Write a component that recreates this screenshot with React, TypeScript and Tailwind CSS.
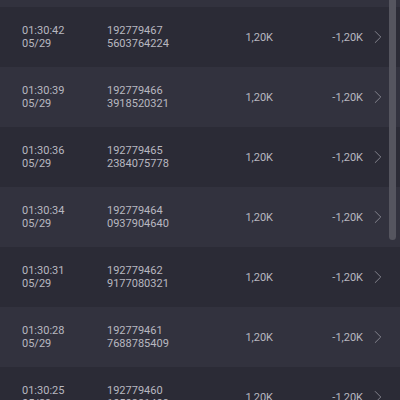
import { ChevronRight } from "lucide-react";

interface Trade {
  time: string;
  date: string;
  id: string;
  ref: string;
  amount: string;
  pnl: string;
}

const trades: Trade[] = [
  { time: "01:30:42", date: "05/29", id: "192779467", ref: "5603764224", amount: "1,20K", pnl: "-1,20K" },
  { time: "01:30:39", date: "05/29", id: "192779466", ref: "3918520321", amount: "1,20K", pnl: "-1,20K" },
  { time: "01:30:36", date: "05/29", id: "192779465", ref: "2384075778", amount: "1,20K", pnl: "-1,20K" },
  { time: "01:30:34", date: "05/29", id: "192779464", ref: "0937904640", amount: "1,20K", pnl: "-1,20K" },
  { time: "01:30:31", date: "05/29", id: "192779462", ref: "9177080321", amount: "1,20K", pnl: "-1,20K" },
  { time: "01:30:28", date: "05/29", id: "192779461", ref: "7688785409", amount: "1,20K", pnl: "-1,20K" },
  { time: "01:30:25", date: "05/29", id: "192779460", ref: "1050381409", amount: "1,20K", pnl: "-1,20K" },
];

export default function App() {
  return (
    <div className="relative h-[400px] w-[400px] overflow-hidden bg-[#2b2b36] font-['Roboto',sans-serif] text-[11px] leading-[13px] text-[#b8b8c0]">
      <div className="h-[7px] bg-[#32323e]" />
      {trades.map((t, i) => (
        <div
          key={t.id}
          className={`flex h-[60px] items-center ${i % 2 === 0 ? "bg-[#2b2b36]" : "bg-[#32323e]"}`}
        >
          <div className="w-[107px] pl-[22px]">
            <div>{t.time}</div>
            <div>{t.date}</div>
          </div>
          <div className="w-[120px]">
            <div>{t.id}</div>
            <div>{t.ref}</div>
          </div>
          <div className="w-[46px] text-right">{t.amount}</div>
          <div className="w-[90px] text-right">{t.pnl}</div>
          <ChevronRight size={22} strokeWidth={1} className="ml-[4px] text-[#8a8a94]" />
        </div>
      ))}
      <div className="absolute right-[4px] top-0 h-[240px] w-[7px] rounded-b-full bg-[#55555f]" />
    </div>
  );
}
